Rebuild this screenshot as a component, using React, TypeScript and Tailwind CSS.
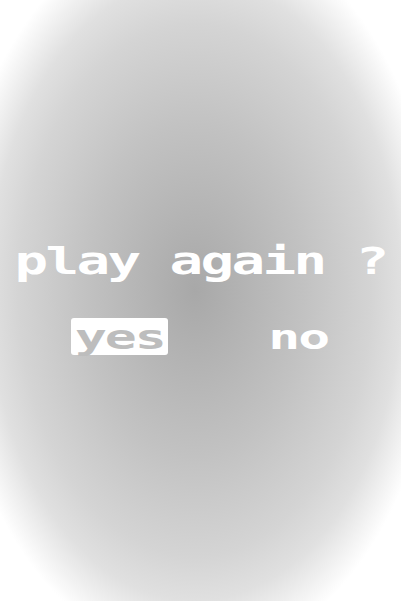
// Game-over prompt: "play again ?" with a yes / no choice over a vignette.
const pixelFont = "font-['DejaVu_Sans_Mono','Liberation_Mono',monospace] font-bold";

export default function App() {
  return (
    <main className="flex min-h-[601px] w-full flex-col items-center bg-[radial-gradient(ellipse_245px_370px_at_195px_290px,#a8a8a8_0%,#c2c2c2_45%,#d4d4d4_72%,#e0e0e0_84%,#ffffff_100%)] pt-[242px] select-none">
      <h1 className={`${pixelFont} text-[38px] leading-[38px] text-white`}>
        <span className="inline-block scale-x-[1.47] tracking-[-1.8px] whitespace-pre">play again ?</span>
      </h1>

      <div className="mt-[38px] flex w-full items-start pl-[71px]">
        <button className={`${pixelFont} h-[37px] w-[97px] rounded-[3px] bg-white pt-[1px] text-[34px] leading-[30px] text-[#bdbdbd]`}>
          <span className="inline-block scale-x-[1.56] tracking-[-1.3px]">yes</span>
        </button>
        <button className={`${pixelFont} ml-[102px] h-[37px] w-[56px] pt-[1px] text-[34px] leading-[30px] text-white`}>
          <span className="inline-block scale-x-[1.56] tracking-[-1.3px]">no</span>
        </button>
      </div>
    </main>
  );
}
